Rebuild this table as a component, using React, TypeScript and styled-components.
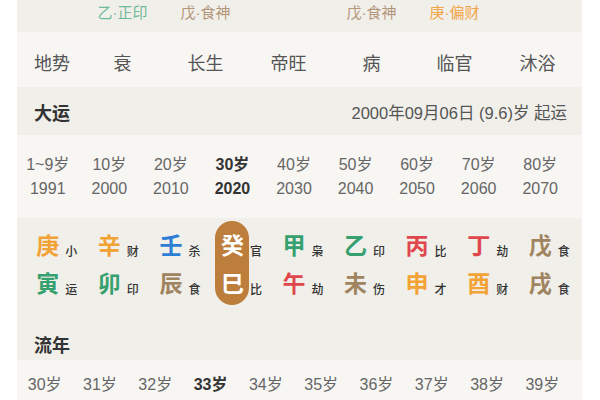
import React from "react";
import styled, { createGlobalStyle } from "styled-components";

const GlobalStyle = createGlobalStyle`
  html, body {
    margin: 0;
    padding: 0;
    background: #ffffff;
  }
  body {
    font-family: "Liberation Sans", "Noto Sans CJK SC", sans-serif;
    color: #555;
  }
`;

const DARK_BG = "#f1efea";
const LIGHT_BG = "#f7f6f3";

const Panel = styled.div`
  margin-left: 17px;
  width: 565px;
  display: flex;
  flex-direction: column;
`;

const PillarGrid = styled.div<{ $h: number; $bg: string }>`
  display: grid;
  grid-template-columns: 64px repeat(6, 83px);
  height: ${(p) => p.$h}px;
  background: ${(p) => p.$bg};
  align-items: center;
`;

const TenGod = styled.div<{ $color: string }>`
  text-align: center;
  font-size: 15px;
  line-height: 26px;
  align-self: start;
  color: ${(p) => p.$color};
  font-family: "Liberation Sans", "Noto Sans CJK SC", sans-serif;
`;

const RowLabel = styled.div`
  padding-left: 17px;
  font-size: 18px;
  color: #555;
  font-family: "Noto Sans CJK SC", sans-serif;
  padding-top: 4px;
`;

const StageCell = styled.div`
  text-align: center;
  font-size: 18px;
  color: #555;
  font-family: "Noto Sans CJK SC", sans-serif;
  padding-top: 4px;
`;

const SectionHeader = styled.div<{ $h: number; $pt: number }>`
  display: flex;
  justify-content: space-between;
  align-items: center;
  box-sizing: border-box;
  height: ${(p) => p.$h}px;
  padding: ${(p) => p.$pt}px 15px 0 17px;
  background: ${DARK_BG};
`;

const HeaderTitle = styled.div`
  font-family: "Noto Sans CJK SC", sans-serif;
  font-weight: 700;
  font-size: 18px;
  color: #333;
`;

const HeaderNote = styled.div`
  font-size: 16.5px;
  color: #555;
`;

const AgeGrid = styled.div<{ $cols: number; $h: number; $pt: number; $pr: number }>`
  display: grid;
  grid-template-columns: repeat(${(p) => p.$cols}, 1fr);
  box-sizing: border-box;
  height: ${(p) => p.$h}px;
  padding: ${(p) => p.$pt}px ${(p) => p.$pr}px 0 0;
  background: ${LIGHT_BG};
  align-content: start;
`;

const AgeCell = styled.div<{ $active?: boolean }>`
  text-align: center;
  font-size: 16px;
  line-height: 24px;
  color: ${(p) => (p.$active ? "#333" : "#666")};
  font-weight: ${(p) => (p.$active ? 700 : 400)};
  white-space: nowrap;
`;

const GanzhiBlock = styled.div`
  display: grid;
  grid-template-columns: repeat(9, 1fr);
  box-sizing: border-box;
  height: 100px;
  padding: 3px 11px 0 0;
  background: ${DARK_BG};
  align-items: start;
`;

const GanzhiColumn = styled.div`
  display: flex;
  justify-content: center;
`;

const Stack = styled.div<{ $active?: boolean }>`
  width: 34px;
  padding: 4px 0;
  border-radius: 17px;
  background: ${(p) => (p.$active ? "#bd7d3b" : "transparent")};
  display: flex;
  flex-direction: column;
  align-items: center;
`;

const CharBox = styled.div`
  position: relative;
  height: 38px;
  display: flex;
  align-items: center;
`;

const Char = styled.span<{ $color: string }>`
  font-family: "Noto Sans CJK SC", sans-serif;
  font-weight: 700;
  font-size: 23px;
  line-height: 23px;
  color: ${(p) => p.$color};
`;

const SubLabel = styled.span`
  position: absolute;
  left: calc(100% + 6px);
  bottom: 6px;
  font-family: "Noto Sans CJK SC", sans-serif;
  font-weight: 500;
  font-size: 12px;
  line-height: 12px;
  color: #333;
  white-space: nowrap;
`;

const C = {
  orange: "#f3a236",
  blue: "#2b7dd6",
  green: "#36a06f",
  red: "#e0474d",
  brown: "#a0845f",
  white: "#ffffff",
};

type GZ = { c: string; color: string; l: string };

const ganzhi: { top: GZ; bottom: GZ; active?: boolean }[] = [
  { top: { c: "庚", color: C.orange, l: "小" }, bottom: { c: "寅", color: C.green, l: "运" } },
  { top: { c: "辛", color: C.orange, l: "财" }, bottom: { c: "卯", color: C.green, l: "印" } },
  { top: { c: "壬", color: C.blue, l: "杀" }, bottom: { c: "辰", color: C.brown, l: "食" } },
  { top: { c: "癸", color: C.white, l: "官" }, bottom: { c: "巳", color: C.white, l: "比" }, active: true },
  { top: { c: "甲", color: C.green, l: "枭" }, bottom: { c: "午", color: C.red, l: "劫" } },
  { top: { c: "乙", color: C.green, l: "印" }, bottom: { c: "未", color: C.brown, l: "伤" } },
  { top: { c: "丙", color: C.red, l: "比" }, bottom: { c: "申", color: C.orange, l: "才" } },
  { top: { c: "丁", color: C.red, l: "劫" }, bottom: { c: "酉", color: C.orange, l: "财" } },
  { top: { c: "戊", color: C.brown, l: "食" }, bottom: { c: "戌", color: C.brown, l: "食" } },
];

const dayunAges = ["1~9岁", "10岁", "20岁", "30岁", "40岁", "50岁", "60岁", "70岁", "80岁"];
const dayunYears = ["1991", "2000", "2010", "2020", "2030", "2040", "2050", "2060", "2070"];

const tenGods: ({ t: string; color: string } | null)[] = [
  { t: "乙·正印", color: "#6dbb98" },
  { t: "戊·食神", color: "#b3957a" },
  null,
  { t: "戊·食神", color: "#b3957a" },
  { t: "庚·偏财", color: "#f2a548" },
  null,
];

const stages = ["衰", "长生", "帝旺", "病", "临官", "沐浴"];

const liunian = Array.from({ length: 10 }, (_, i) => ({
  age: `${30 + i}岁`,
  active: i === 3,
}));

export default function App() {
  return (
    <>
      <GlobalStyle />
      <Panel>
        <PillarGrid $h={32} $bg={DARK_BG}>
          <div />
          {tenGods.map((g, i) =>
            g ? (
              <TenGod key={i} $color={g.color}>
                {g.t}
              </TenGod>
            ) : (
              <div key={i} />
            )
          )}
        </PillarGrid>
        <PillarGrid $h={55} $bg={LIGHT_BG}>
          <RowLabel>地势</RowLabel>
          {stages.map((s) => (
            <StageCell key={s}>{s}</StageCell>
          ))}
        </PillarGrid>

        <SectionHeader $h={48} $pt={2}>
          <HeaderTitle>大运</HeaderTitle>
          <HeaderNote>2000年09月06日 (9.6)岁 起运</HeaderNote>
        </SectionHeader>
        <AgeGrid $cols={9} $h={83} $pt={18} $pr={11}>
          {dayunAges.map((a, i) => (
            <AgeCell key={a} $active={i === 3}>
              {a}
            </AgeCell>
          ))}
          {dayunYears.map((y, i) => (
            <AgeCell key={y} $active={i === 3}>
              {y}
            </AgeCell>
          ))}
        </AgeGrid>

        <GanzhiBlock>
          {ganzhi.map((g, i) => (
            <GanzhiColumn key={i}>
              <Stack $active={g.active}>
                <CharBox>
                  <Char $color={g.top.color}>{g.top.c}</Char>
                  <SubLabel>{g.top.l}</SubLabel>
                </CharBox>
                <CharBox>
                  <Char $color={g.bottom.color}>{g.bottom.c}</Char>
                  <SubLabel>{g.bottom.l}</SubLabel>
                </CharBox>
              </Stack>
            </GanzhiColumn>
          ))}
        </GanzhiBlock>

        <SectionHeader $h={42} $pt={10}>
          <HeaderTitle>流年</HeaderTitle>
        </SectionHeader>
        <AgeGrid $cols={10} $h={40} $pt={13} $pr={12}>
          {liunian.map((l) => (
            <AgeCell key={l.age} $active={l.active}>
              {l.age}
            </AgeCell>
          ))}
        </AgeGrid>
      </Panel>
    </>
  );
}
